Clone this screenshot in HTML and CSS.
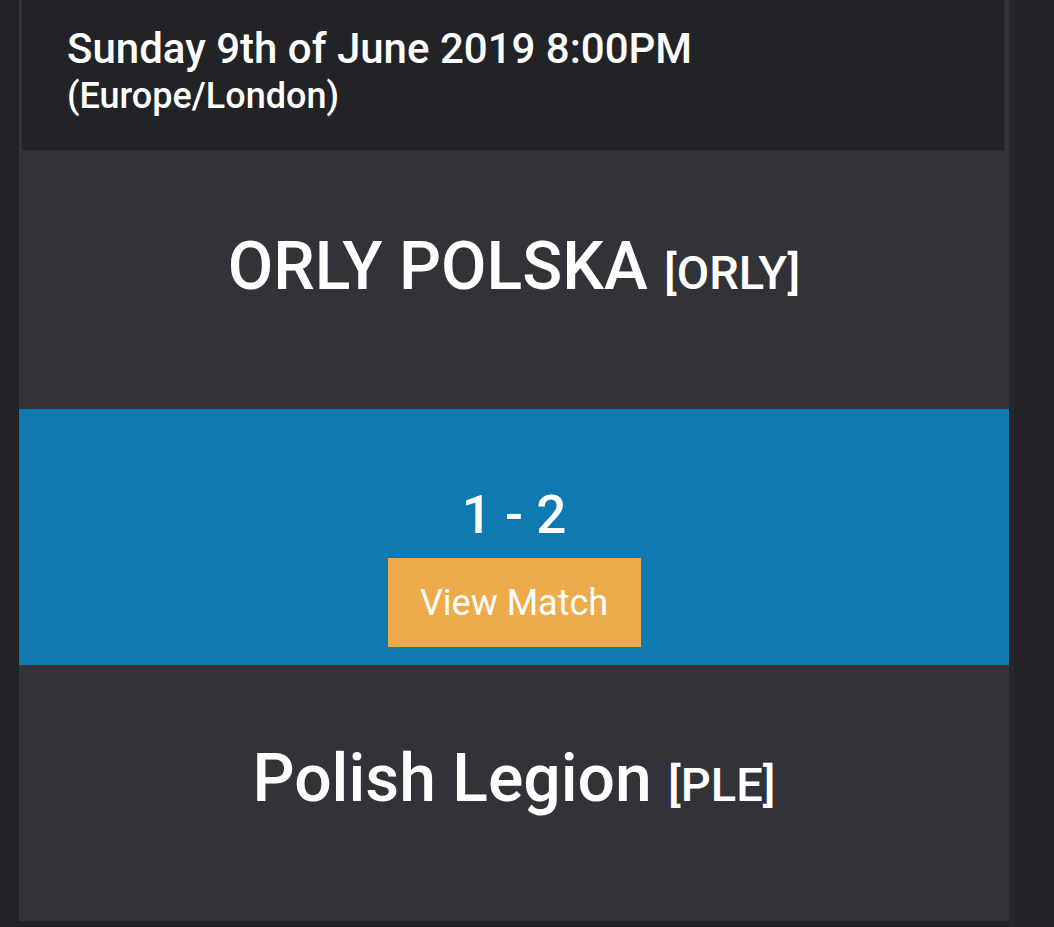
FILE: index.html
```html
<!DOCTYPE html>
<html>
<head>
<meta charset="utf-8">
<link rel="stylesheet" href="styles.css">
</head>
<body>
<div class="page">
  <div class="card">
    <div class="header">
      <div class="date">Sunday 9th of June 2019 8:00PM</div>
      <div class="tz">(Europe/London)</div>
    </div>
    <div class="team team-home">
      <div class="team-name">ORLY POLSKA <span class="tag">[ORLY]</span></div>
    </div>
    <div class="result">
      <div class="score">1 - 2</div>
      <a class="btn" href="#">View Match</a>
    </div>
    <div class="team team-away">
      <div class="team-name">Polish Legion <span class="tag">[PLE]</span></div>
    </div>
  </div>
  <div class="scroll-edge"></div>
</div>
</body>
</html>
```

FILE: styles.css
```css
html, body {
  margin: 0;
  padding: 0;
  background: #222327;
  font-family: Roboto, "Liberation Sans", sans-serif;
  color: #ffffff;
}

.page {
  display: flex;
  height: 927px;
  overflow: hidden;
}

.card {
  margin-left: 19px;
  width: 990px;
  height: 921px;
  background: #323338;
  display: flex;
  flex-direction: column;
}

.header {
  margin: 0 4px 0 3px;
  height: 151px;
  background: #222327;
  border-right: 1px solid #2c2d31;
  border-bottom: 1px solid #2c2d31;
  padding-left: 45px;
  padding-top: 24px;
  box-sizing: border-box;
  font-weight: 500;
}

.date {
  font-size: 42px;
  line-height: 50px;
}

.tz {
  font-size: 36px;
  line-height: 44px;
}

.team {
  height: 258px;
  display: flex;
  align-items: center;
  justify-content: center;
  padding-bottom: 20px;
  box-sizing: border-box;
}

.team-away {
  height: 256px;
  padding-bottom: 22px;
}

.team-name {
  font-size: 66px;
  font-weight: 500;
  line-height: 78px;
}

.tag {
  font-size: 47px;
  font-weight: 500;
}

.result {
  height: 256px;
  background: #0f7ab0;
  display: flex;
  flex-direction: column;
  align-items: center;
  padding-top: 78px;
  box-sizing: border-box;
}

.score {
  font-size: 53px;
  font-weight: 500;
  line-height: 56px;
}

.btn {
  margin-top: 15px;
  width: 253px;
  height: 89px;
  background: #eeab4b;
  color: #ffffff;
  text-decoration: none;
  font-size: 36px;
  display: flex;
  align-items: center;
  justify-content: center;
}

.scroll-edge {
  width: 4px;
  background: #26272b;
  border-right: 1px solid #2a2b2f;
}
```
